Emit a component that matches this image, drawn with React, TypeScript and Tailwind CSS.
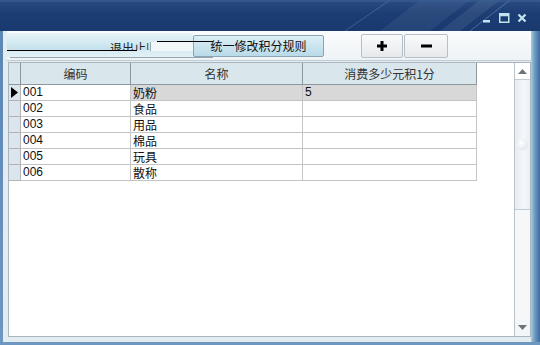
import React from "react";

const rows = [
  { code: "001", name: "奶粉", val: "5", sel: true },
  { code: "002", name: "食品", val: "" },
  { code: "003", name: "用品", val: "" },
  { code: "004", name: "棉品", val: "" },
  { code: "005", name: "玩具", val: "" },
  { code: "006", name: "散称", val: "" },
];

export default function App() {
  return (
    <div className="w-[540px] h-[345px] overflow-hidden flex flex-col bg-[linear-gradient(180deg,#5a86b3,#6d96c0)] font-['Liberation_Sans','Noto_Sans_CJK_SC',sans-serif] text-[12px] text-[#111]">
      {/* title bar */}
      <div className="relative h-[31px] shrink-0 bg-[linear-gradient(180deg,#2a4c82_0%,#1c3d73_45%,#183a6f_100%)] flex justify-end items-start pt-[13px] pr-[13px]">
        <svg className="absolute left-0 top-0" width="540" height="31" viewBox="0 0 540 31">
          <polygon points="380,31 420,0 470,0 430,31" fill="#ffffff" opacity="0.06" />
          <polygon points="440,31 480,0 500,0 460,31" fill="#ffffff" opacity="0.08" />
          <line x1="345" y1="31" x2="390" y2="0" stroke="#8fb4d8" strokeOpacity="0.3" strokeWidth="1" />
          <line x1="470" y1="31" x2="510" y2="0" stroke="#a8c8e4" strokeOpacity="0.35" strokeWidth="1" />
          <rect x="0" y="0" width="540" height="2" fill="#3b5f94" opacity="0.6" />
        </svg>
        <div className="relative flex items-start gap-[7px]">
          <svg width="10" height="10" viewBox="0 0 10 10">
            <rect x="1" y="7" width="7" height="2.5" fill="#c3e2ee" />
          </svg>
          <svg width="11" height="10" viewBox="0 0 11 10">
            <rect x="0.75" y="0.75" width="9" height="8.5" fill="none" stroke="#c3e2ee" strokeWidth="1.5" />
            <rect x="0.75" y="0.75" width="9" height="2.5" fill="#c3e2ee" />
          </svg>
          <svg width="10" height="10" viewBox="0 0 10 10">
            <path d="M1.5 1.5 L8.5 8.5 M8.5 1.5 L1.5 8.5" stroke="#c3e2ee" strokeWidth="2.3" />
          </svg>
        </div>
      </div>

      {/* body */}
      <div className="flex-1 flex pl-[3px] pb-[3px]">
        <div className="flex-1 flex flex-col bg-[#e3ecf1] pb-[5px]">
          {/* toolbar */}
          <div className="relative ml-[4px] h-[30px] shrink-0 bg-[linear-gradient(180deg,#fbfcfd,#eef3f6)] border-b border-[#c2ccd3] flex items-start">
            <div className="relative mt-[2px] w-[186px] h-[24px] bg-[linear-gradient(180deg,#e8f5f9_0%,#d3eaf2_40%,#c4e1eb_68%,#d6ecf3_72%,#e2f1f6_100%)]">
              <div className="absolute left-[103px] top-[9px] h-[8px] overflow-hidden leading-[12px] font-['Noto_Sans_CJK_SC',sans-serif] text-[12px] text-[#222]">
                退出止|
              </div>
              <div className="absolute left-[143px] top-[9px] w-[43px] h-[9px] bg-[#f2f8fa] border-l border-[#9aa]" />
              <div className="absolute left-0 top-[17px] w-[130px] h-[1px] bg-black" />
              <div className="absolute left-[150px] top-[8px] w-[56px] h-[1px] bg-black" />
              <div className="absolute left-[3px] top-[24px] w-[203px] h-[1px] bg-[#9aa4ab]" />
            </div>
            <div className="mt-[4px] w-[131px] h-[22px] rounded-[2px] border border-[#8aa3b5] bg-[linear-gradient(180deg,#dcf0f7,#b9dae8)] flex items-center justify-center font-['Noto_Sans_CJK_SC',sans-serif] text-[12px] leading-none text-[#111]">
              统一修改积分规则
            </div>
            <div className="ml-[37px] mt-[3px] flex gap-[1px]">
              <div className="w-[42px] h-[24px] rounded-[2px] border border-[#b7c0c8] bg-[linear-gradient(180deg,#fafafa,#e6e9ec)] flex items-center justify-center">
                <svg width="10" height="10" viewBox="0 0 10 10">
                  <rect x="3.5" y="0" width="3" height="10" fill="#000" />
                  <rect x="0" y="3.5" width="10" height="3" fill="#000" />
                </svg>
              </div>
              <div className="w-[44px] h-[24px] rounded-[2px] border border-[#b7c0c8] bg-[linear-gradient(180deg,#fafafa,#e6e9ec)] flex items-center justify-center">
                <svg width="11" height="4" viewBox="0 0 11 4">
                  <rect x="0" y="0.5" width="11" height="3" fill="#000" />
                </svg>
              </div>
            </div>
          </div>

          {/* grid */}
          <div className="ml-[5px] mt-[1px] flex-1 flex border border-[#a9b5bf] bg-white">
            <div className="flex-1 flex flex-col">
              {/* header */}
              <div className="flex h-[22px] shrink-0">
                <div className="w-[12px] bg-[#d9e6ec] border-r border-b border-[#8e979e]" />
                <div className="w-[110px] bg-[#d9e6ec] border-r border-b border-[#8e979e] flex items-center justify-center font-['Noto_Sans_CJK_SC',sans-serif] text-[#333]">编码</div>
                <div className="w-[172px] bg-[#d9e6ec] border-r border-b border-[#8e979e] flex items-center justify-center font-['Noto_Sans_CJK_SC',sans-serif] text-[#333]">名称</div>
                <div className="w-[174px] bg-[#d9e6ec] border-r border-b border-[#8e979e] flex items-center justify-center font-['Noto_Sans_CJK_SC',sans-serif] text-[#333]">消费多少元积1分</div>
              </div>
              {rows.map((r) => (
                <div key={r.code} className="flex h-[16px] shrink-0">
                  <div className="w-[12px] bg-[#dae6ec] border-r border-b border-[#b4b4b4] flex items-center justify-center">
                    {r.sel && (
                      <svg width="7" height="11" viewBox="0 0 7 11">
                        <polygon points="0,0 7,5.5 0,11" fill="#000" />
                      </svg>
                    )}
                  </div>
                  <div className="w-[110px] bg-white border-r border-b border-[#c4c4c4] pl-[2px] leading-[15px]">{r.code}</div>
                  <div className={`w-[172px] border-r border-b border-[#c4c4c4] pl-[2px] leading-[15px] font-['Noto_Sans_CJK_SC',sans-serif] ${r.sel ? "bg-[#d8d8d8]" : "bg-white"}`}>{r.name}</div>
                  <div className={`w-[174px] border-r border-b border-[#c4c4c4] pl-[2px] leading-[15px] ${r.sel ? "bg-[#d8d8d8]" : "bg-white"}`}>{r.val}</div>
                </div>
              ))}
            </div>
            {/* scrollbar */}
            <div className="w-[16px] flex flex-col border-l border-[#b9c3cc] bg-[#f3f6f8]">
              <div className="h-[17px] shrink-0 bg-white border-b border-[#c3ccd4] flex items-center justify-center">
                <svg width="9" height="5" viewBox="0 0 9 5">
                  <polygon points="0,5 4.5,0 9,5" fill="#6e7378" />
                </svg>
              </div>
              <div className="h-[130px] shrink-0 border-b border-[#c3ccd4] bg-[linear-gradient(90deg,#e6ecf2,#f4f7fa_60%,#e9eef3)] flex items-center justify-center">
                <div className="w-[11px] h-[11px] rounded-full bg-[radial-gradient(circle_at_40%_35%,#ffffff,#e2e9ef_70%,#d2dbe3)]" />
              </div>
              <div className="flex-1 bg-[#f5f7f9]" />
              <div className="h-[17px] shrink-0 flex items-center justify-center">
                <svg width="9" height="5" viewBox="0 0 9 5">
                  <polygon points="0,0 4.5,5 9,0" fill="#6e7378" />
                </svg>
              </div>
            </div>
          </div>
        </div>
        <div className="w-[9px] bg-[linear-gradient(90deg,#a6cfdc,#6e9cc4_40%,#3f6b9e)]" />
      </div>
    </div>
  );
}
